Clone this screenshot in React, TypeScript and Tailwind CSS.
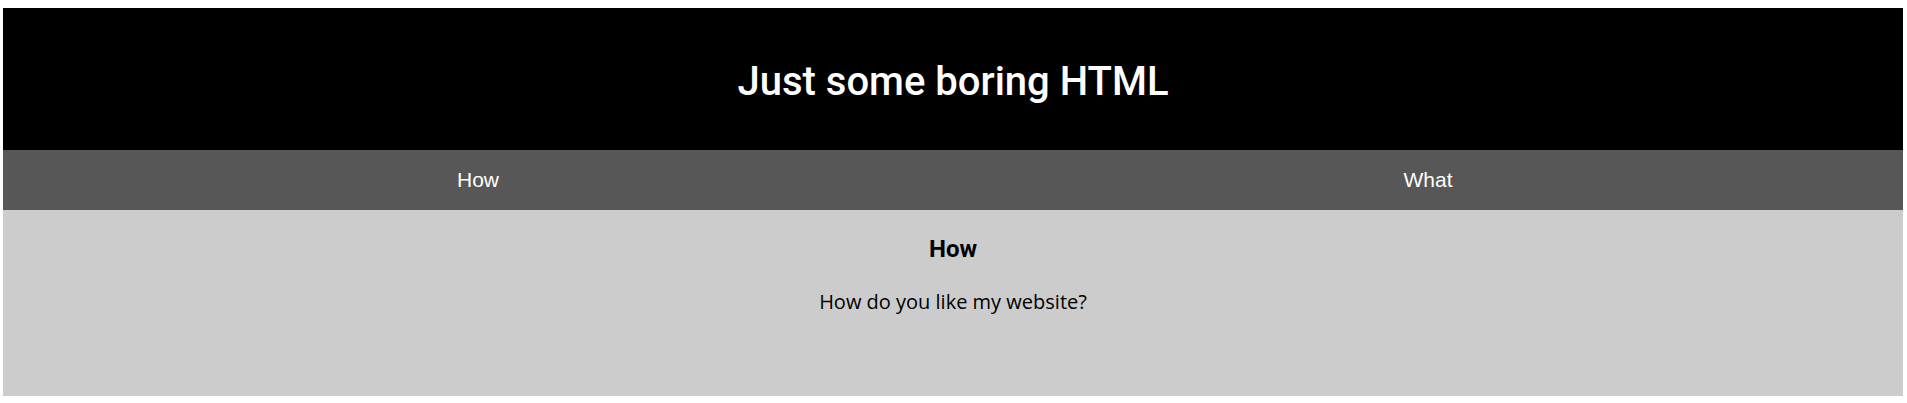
export default function App() {
  return (
    <div className="w-[1907px] h-[403px] bg-white pt-[8px]">
      <div className="ml-[3px] w-[1900px] flex flex-col">
        <header className="h-[142px] bg-black flex items-center justify-center pt-[5px]">
          <h1 className="text-white text-[40px] leading-[48px] font-medium" style={{ fontFamily: "Roboto, sans-serif" }}>
            Just some boring HTML
          </h1>
        </header>
        <nav className="h-[60px] bg-[#575757] grid grid-cols-2" style={{ fontFamily: '"Liberation Sans", Arial, sans-serif' }}>
          <div className="flex items-center justify-center text-white text-[21px]">How</div>
          <div className="flex items-center justify-center text-white text-[21px]">What</div>
        </nav>
        <main className="h-[186px] bg-[#cccccc] flex flex-col items-center pt-[25px]">
          <h2 className="text-black text-[24px] leading-[28px] font-bold" style={{ fontFamily: "Roboto, sans-serif" }}>
            How
          </h2>
          <p className="mt-[25px] text-black text-[20px] leading-[28px]" style={{ fontFamily: '"Open Sans", sans-serif' }}>
            How do you like my website?
          </p>
        </main>
      </div>
    </div>
  );
}
